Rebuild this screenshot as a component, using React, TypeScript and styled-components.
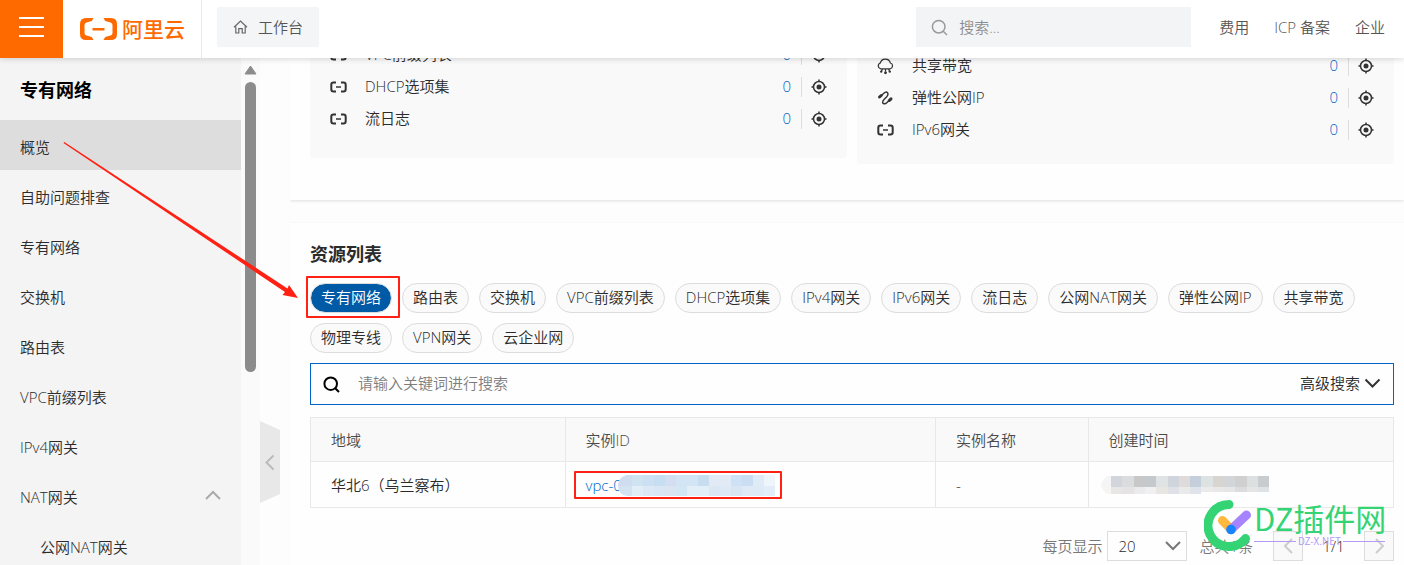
import React from 'react';
import styled, { createGlobalStyle, css } from 'styled-components';

const GlobalStyle = createGlobalStyle`
  * { box-sizing: border-box; }
  body {
    margin: 0;
    background: #fdfdfd;
    color: #2b2b2b;
    font: 350 15px/20px "Open Sans", "Noto Sans CJK SC", sans-serif;
  }
  button, input, select { font: inherit; color: inherit; }
  button { cursor: pointer; }
  a { text-decoration: none; }
`;

const ORANGE = '#ff6a00';
const RED = '#ff2114';
const BLUE = '#0064c8';

/* ---------- shell ---------- */

const Shell = styled.div`
  position: relative;
  display: flex;
  flex-direction: column;
  height: 100vh;
  overflow: hidden;
`;

const Header = styled.header`
  position: relative;
  z-index: 2;
  flex: none;
  display: flex;
  align-items: center;
  height: 58px;
  padding-right: 19px;
  background: #fff;
  box-shadow: 0 1px 6px rgba(0, 0, 0, 0.16);
`;

const MenuButton = styled.button`
  display: flex;
  align-items: center;
  justify-content: center;
  width: 63px;
  height: 58px;
  padding: 0 0 4px;
  border: 0;
  background: ${ORANGE};
`;

const Brand = styled.a`
  display: flex;
  align-items: center;
  gap: 5px;
  width: 139px;
  height: 58px;
  padding-left: 17px;
  border-right: 1px solid #e8e8e8;
  color: ${ORANGE};
  font-size: 21px;
  font-weight: 500;
  line-height: 24px;
  white-space: nowrap;
`;

const WorkbenchButton = styled.button`
  display: flex;
  align-items: center;
  gap: 10px;
  height: 40px;
  margin: 0 auto 4px 15px;
  padding: 0 16px;
  border: 0;
  border-radius: 2px;
  background: #f4f5f7;
  color: #555;
`;

const GlobalSearch = styled.label`
  display: flex;
  align-items: center;
  gap: 11px;
  width: 275px;
  height: 40px;
  margin: 0 28px 4px 0;
  padding: 0 15px;
  background: #f3f4f6;
  color: #999;
`;

const PlainInput = styled.input`
  flex: 1;
  min-width: 0;
  padding: 0;
  border: 0;
  outline: 0;
  background: transparent;
  &::placeholder { color: #8c8c8c; opacity: 1; }
`;

const TopLinks = styled.nav`
  display: flex;
  gap: 25px;
  padding-bottom: 4px;
  a { color: #555; white-space: nowrap; }
`;

const Body = styled.div`
  flex: 1;
  min-height: 0;
  display: flex;
`;

/* ---------- sidebar ---------- */

const Sidebar = styled.nav`
  flex: none;
  width: 241px;
  background: #f4f4f4;
`;

const SidebarTitle = styled.h2`
  margin: 0;
  padding: 20px 20px 18px;
  color: #000;
  font-size: 18px;
  line-height: 24px;
`;

const MenuLink = styled.a<{ $active?: boolean; $nested?: boolean }>`
  display: flex;
  align-items: center;
  justify-content: space-between;
  height: 50px;
  padding: 4px 20px 0 ${(p) => (p.$nested ? 40 : 20)}px;
  background: ${(p) => (p.$active ? '#ddd' : 'transparent')};
  color: inherit;
`;

const ScrollTrack = styled.div`
  flex: none;
  display: flex;
  flex-direction: column;
  align-items: center;
  gap: 7px;
  width: 19px;
  padding-top: 7px;
  background: #fafafa;
`;

const ScrollThumb = styled.div`
  width: 11px;
  height: 58%;
  border-radius: 6px;
  background: #8b8b8b;
`;

const Rail = styled.div`
  flex: none;
  width: 30px;
  padding-top: 363px;
`;

const CollapseButton = styled.button`
  display: block;
  padding: 0;
  border: 0;
  background: none;
`;

/* ---------- content ---------- */

const Main = styled.main`
  flex: 1;
  min-width: 0;
  overflow: hidden;
  display: flex;
  flex-direction: column;
  gap: 23px;
`;

const Card = styled.section`
  flex: none;
  padding: 19px 10px 20px 20px;
  background: #fefefe;
  box-shadow: 0 1px 3px rgba(0, 0, 0, 0.12);
`;

const SummaryCard = styled(Card)`
  margin-top: -39px;
  padding-top: 0;
  padding-bottom: 36px;
`;

const SummaryGrid = styled.div`
  display: grid;
  grid-template-columns: 1fr 1fr;
  gap: 10px;
  align-items: start;
`;

const Panel = styled.ul<{ $offset?: boolean }>`
  margin: 0;
  padding: ${(p) => (p.$offset ? '31px 20px 18px' : '20px 20px 23px')};
  border-radius: 4px;
  background: #f9f9f9;
  list-style: none;
`;

const PanelRow = styled.li`
  display: flex;
  align-items: center;
  height: 32px;
`;

const PanelLabel = styled.span`
  flex: 1;
  padding: 0 0 2px 18px;
`;

const Count = styled.a`
  margin-right: 10px;
  padding-bottom: 2px;
  color: ${BLUE};
`;

const LocateButton = styled.button`
  display: flex;
  align-items: center;
  height: 20px;
  padding: 0 0 0 9px;
  border: 0;
  border-left: 1px solid #ddd;
  background: none;
`;

const CardTitle = styled.h3`
  margin: 0 0 17px;
  font-size: 18px;
  line-height: 24px;
`;

const Tabs = styled.div`
  display: flex;
  flex-wrap: wrap;
  gap: 10px;
  margin-bottom: 10px;
`;

const Tab = styled.button<{ $active?: boolean }>`
  position: relative;
  height: 30px;
  padding: 0 10px 2px;
  border: 1px solid #dcdcdc;
  border-radius: 15px;
  background: #fafafa;
  line-height: 26px;
  white-space: nowrap;

  ${(p) =>
    p.$active &&
    css`
      background: #005aa5;
      background-clip: padding-box;
      color: #fff;

      &::after {
        content: '';
        position: absolute;
        inset: -8px -9px -6px -5px;
        border: 2px solid ${RED};
        border-radius: 1px;
      }
    `}
`;

const FilterBar = styled.div`
  display: flex;
  align-items: center;
  height: 42px;
  margin-bottom: 12px;
  padding: 0 12px;
  border: 1px solid ${BLUE};
`;

const FilterField = styled.label`
  flex: 1;
  display: flex;
  align-items: center;
  gap: 18px;
  color: #000;
  input { padding-bottom: 3px; }
  input::placeholder { color: #7d7d7d; }
`;

const AdvancedButton = styled.button`
  display: flex;
  align-items: center;
  gap: 4px;
  padding: 0 0 2px;
  border: 0;
  background: none;
`;

const Table = styled.table`
  width: 100%;
  table-layout: fixed;
  border-collapse: collapse;

  th, td {
    padding: 0 20px;
    border: 1px solid #e8e8e8;
    font-weight: inherit;
    text-align: left;
  }
  th { height: 44px; background: #f9f9f9; color: #4a4a4a; }
  td { height: 46px; }
`;

const InstanceId = styled.span`
  position: relative;
  display: inline-flex;
  align-items: center;
  height: 21px;
  vertical-align: middle;

  a { width: 32px; color: ${BLUE}; white-space: nowrap; }
  svg { position: relative; }

  &::after {
    content: '';
    position: absolute;
    inset: -4px -7px -3px -12px;
    border: 2px solid ${RED};
    border-radius: 1px;
    pointer-events: none;
  }
`;

const CreatedAt = styled.span`
  display: flex;
  margin-left: -8px;
`;

const Pager = styled.div`
  display: flex;
  align-items: center;
  justify-content: flex-end;
  margin-top: 23px;
  color: #777;
  white-space: nowrap;
`;

const PageSizeLabel = styled.label`
  display: flex;
  align-items: center;
  gap: 5px;
`;

const SelectBox = styled.span`
  display: grid;
  align-items: center;
  width: 80px;
  height: 30px;
  margin-right: 12px;
  border: 1px solid #ddd;
  color: #2b2b2b;
  > * { grid-area: 1 / 1; }
  svg { justify-self: end; margin-right: 5px; pointer-events: none; }
`;

const PageSize = styled.select`
  appearance: none;
  width: 100%;
  height: 28px;
  padding: 0 10px;
  border: 0;
  outline: 0;
  background: transparent;
`;

const PageButton = styled.button`
  display: flex;
  align-items: center;
  justify-content: center;
  width: 30px;
  height: 30px;
  padding: 0;
  border: 1px solid #ddd;
  background: #f9f9f9;
`;

const PageTotal = styled.span`
  margin-right: 20px;
`;

const PageNumber = styled.span`
  width: 61px;
  color: #2b2b2b;
  text-align: center;
`;

/* ---------- overlays ---------- */

const Arrow = styled.svg`
  position: absolute;
  z-index: 3;
  top: 140px;
  left: 60px;
  pointer-events: none;
`;

const Watermark = styled.div`
  position: absolute;
  z-index: 3;
  right: 19px;
  bottom: 14px;
  display: flex;
  align-items: flex-start;
  gap: 2px;
  pointer-events: none;
`;

const WatermarkText = styled.div`
  display: flex;
  flex-direction: column;
  width: 131px;
  color: #34d474;
  font: 31px/35px "Noto Sans CJK SC", sans-serif;
  white-space: nowrap;
`;

const WatermarkSite = styled.span`
  display: flex;
  align-items: center;
  gap: 2px;
  color: #b49af5;
  font-size: 10px;
  line-height: 12px;

  &::before, &::after {
    content: '';
    flex: 1;
    height: 1px;
    background: #b49af5;
  }
`;

/* ---------- drawings ---------- */

const Chevron = ({ d, w, h, color, stroke = 2 }: { d: string; w: number; h: number; color: string; stroke?: number }) => (
  <svg width={w} height={h} fill="none" stroke={color} strokeWidth={stroke} aria-hidden="true">
    <path d={d} />
  </svg>
);

const BracketIcon = () => (
  <svg width="17" height="12" viewBox="0 0 17 12" fill="none" stroke="#333" aria-hidden="true">
    <path d="M6 1.500H3.500Q1.300 1.500 1.300 3.700V8.300Q1.300 10.500 3.500 10.500H6M11 1.500h2.500Q15.700 1.500 15.700 3.700V8.300Q15.700 10.500 13.500 10.500H11" strokeWidth="2" />
    <path d="M6 6h5" strokeWidth="1.500" />
  </svg>
);

const CloudIcon = () => (
  <svg width="17" height="17" viewBox="0 0 17 17" fill="none" stroke="#333" strokeWidth="1.200" aria-hidden="true">
    <path d="M3.800 10.800A3 3 0 0 1 3.300 5 5.200 5.200 0 0 1 13.400 5 3 3 0 0 1 13.200 10.800M3.800 10.800h9.400M8.500 10.800v3M5.500 11l-1 2M11.500 11l1 2" />
    <g fill="#333" stroke="none">
      <circle cx="8.500" cy="14.800" r="1.400" />
      <circle cx="4.200" cy="13.600" r="1.200" />
      <circle cx="12.800" cy="13.600" r="1.200" />
    </g>
  </svg>
);

const EipIcon = () => (
  <svg width="17" height="14" viewBox="0 0 17 14" fill="none" stroke="#333" strokeLinecap="round" aria-hidden="true">
    <path d="M3.500 5.500 6.500 2.500Q9 0 10.500 1.800 11.800 3.500 9.500 6L7 8.500Q4.800 11 6.200 12.400 8 13.500 10 11.500L13 8.500" strokeWidth="1.400" />
    <path d="M2.500 6 4.200 4.500M12.300 9.500 14 7.900" strokeWidth="3" />
  </svg>
);

const TargetIcon = () => (
  <svg width="16" height="16" viewBox="0 0 16 16" fill="none" stroke="#333" strokeWidth="1.500" aria-hidden="true">
    <circle cx="8" cy="8" r="5.500" />
    <path d="M8 .5v2.500M8 13v2.500M.5 8h2.500M13 8h2.500" />
    <circle cx="8" cy="8" r="2.500" fill="#333" stroke="none" />
  </svg>
);

const SearchIcon = ({ color, stroke }: { color: string; stroke: number }) => (
  <svg width="17" height="17" viewBox="0 0 17 17" fill="none" stroke={color} strokeWidth={stroke} aria-hidden="true">
    <circle cx="7.700" cy="7.700" r="6.300" />
    <path d="M12.200 12.200 16 16" />
  </svg>
);

const HomeIcon = () => (
  <svg width="15" height="14" viewBox="0 0 15 14" fill="none" stroke="#666" strokeWidth="1.200" aria-hidden="true">
    <path d="M1 7.200 7.500 1 14 7.200M2.800 6.500V13H5.800V8.600H9.200V13H12.200V6.500" />
  </svg>
);

const LogoMark = () => (
  <svg width="37" height="22" viewBox="0 0 37 22" fill={ORANGE} aria-hidden="true">
    <path d="M13.500 0H6Q0 0 0 6V16Q0 22 6 22H13.500L11.800 19 6.500 17.500Q4.500 17 4.500 15V7Q4.500 5 6.500 4.500L11.800 3Z" />
    <path d="M23.500 0H31Q37 0 37 6V16Q37 22 31 22H23.500L25.200 19 30.500 17.500Q32.500 17 32.500 15V7Q32.500 5 30.500 4.500L25.200 3Z" />
    <path d="M12.500 10H24.500V12.500H12.500Z" />
  </svg>
);

const ID_CELLS = [
  ['#d0dcef', '#cfe3f0', '#ccdff3', '#c6ddf2', '#d3dff0', '#d3e5f4', '#d3e5f4', '#c6def0', '#e1eaf5', '#e1eaf5', '#cfe1f4', '#cbddf3', '#dfebf7', '#eef5fb'],
  ['#d3e3f1', '#e1eef8', '#dbe8f6', '#dbe6f4', '#dbe4f1', '#d3e6f4', '#e3eff7', '#e3eff7', '#dbe8f4', '#dde9f5', '#d8e6f3', '#dfeaf6', '#deeaf5', '#e3edf7'],
];

const TIME_CELLS = [
  ['#d2d6dc', '#dadcde', '#c9c8c8', '#c4c9ce', '#e0e3e3', '#d0d4dc', '#dfdbda', '#c5cfdb', '#dde2e2', '#d8d5d0', '#d2d6d8', '#d0d0d1', '#dce0e0', '#c9cccf'],
  ['#e9e7e6', '#e6e3e5', '#ebebed', '#f0f0f0', '#e8e6e3', '#e0e1e6', '#eaeaea', '#dfe4ea', '#ebebeb', '#e8e8e8', '#e6e6e6', '#dcdcde', '#e5e5e5', '#dfe2e5'],
];

const IdMosaic = () => (
  <svg width="157" height="21" viewBox="0 0 157 21" shapeRendering="crispEdges" aria-hidden="true">
    <clipPath id="id-clip"><path d="M157 0H9Q0 2 0 11 0 19 9 21H157Z" /></clipPath>
    <g clipPath="url(#id-clip)">
      {ID_CELLS.map((row, r) =>
        row.map((fill, c) => <rect key={`${r}-${c}`} x={c ? c * 11 + 3 : 0} y={r * 11} width={c ? 11 : 14} height={r ? 10 : 11} fill={fill} />),
      )}
    </g>
  </svg>
);

const TimeMosaic = () => (
  <svg width="168" height="18" viewBox="0 0 168 18" aria-hidden="true">
    <path d="M12 0H6Q0 5 0 9T6 18H12Z" fill="#f5f5f5" />
    <g shapeRendering="crispEdges">
      {TIME_CELLS.map((row, r) =>
        row.map((fill, c) => (
          <rect key={`${r}-${c}`} x={10 + c * 11.3} y={r * 11} width="11.300" height={r ? (c > 7 ? 5 : 7) : 11} fill={fill} />
        )),
      )}
    </g>
  </svg>
);

/* ---------- page ---------- */

type Item = { label: string; icon: React.ReactNode };

const LEFT_ITEMS: Item[] = [
  { label: 'VPC前缀列表', icon: <BracketIcon /> },
  { label: 'DHCP选项集', icon: <BracketIcon /> },
  { label: '流日志', icon: <BracketIcon /> },
];

const RIGHT_ITEMS: Item[] = [
  { label: '共享带宽', icon: <CloudIcon /> },
  { label: '弹性公网IP', icon: <EipIcon /> },
  { label: 'IPv6网关', icon: <BracketIcon /> },
];

const MENU = ['概览', '自助问题排查', '专有网络', '交换机', '路由表', 'VPC前缀列表', 'IPv4网关'];

const TABS = [
  '专有网络', '路由表', '交换机', 'VPC前缀列表', 'DHCP选项集', 'IPv4网关', 'IPv6网关',
  '流日志', '公网NAT网关', '弹性公网IP', '共享带宽', '物理专线', 'VPN网关', '云企业网',
];

const SummaryPanel = ({ items, offset }: { items: Item[]; offset?: boolean }) => (
  <Panel $offset={offset}>
    {items.map((item) => (
      <PanelRow key={item.label}>
        {item.icon}
        <PanelLabel>{item.label}</PanelLabel>
        <Count href="#">0</Count>
        <LocateButton aria-label={item.label}><TargetIcon /></LocateButton>
      </PanelRow>
    ))}
  </Panel>
);

export default function App() {
  return (
    <Shell>
      <GlobalStyle />
      <Header>
        <MenuButton aria-label="菜单">
          <svg width="25" height="20" fill="#fff" aria-hidden="true">
            <path d="M0 0h25v2H0zM0 9h25v2H0zM0 18h25v2H0z" />
          </svg>
        </MenuButton>
        <Brand href="#"><LogoMark />阿里云</Brand>
        <WorkbenchButton><HomeIcon />工作台</WorkbenchButton>
        <GlobalSearch>
          <SearchIcon color="#999" stroke={1.5} />
          <PlainInput type="text" placeholder="搜索..." aria-label="搜索" />
        </GlobalSearch>
        <TopLinks>
          <a href="#">费用</a>
          <a href="#">ICP 备案</a>
          <a href="#">企业</a>
        </TopLinks>
      </Header>

      <Body>
        <Sidebar>
          <SidebarTitle>专有网络</SidebarTitle>
          {MENU.map((label, i) => (
            <MenuLink key={label} href="#" $active={i === 0}>{label}</MenuLink>
          ))}
          <MenuLink href="#">
            NAT网关
            <Chevron d="M1 9 8 2l7 7" w={16} h={14} color="#aaa" />
          </MenuLink>
          <MenuLink href="#" $nested>公网NAT网关</MenuLink>
        </Sidebar>
        <ScrollTrack>
          <svg width="13" height="10" aria-hidden="true">
            <path d="M6.500 1 12 9H1Z" fill="#8b8b8b" stroke="#8b8b8b" strokeLinejoin="round" />
          </svg>
          <ScrollThumb />
        </ScrollTrack>
        <Rail>
          <CollapseButton aria-label="收起">
            <svg width="20" height="82" aria-hidden="true">
              <path d="M0 0 20 9V73L0 82Z" fill="#e8e8e8" />
              <path d="M13.500 34.500 6.500 41.500l7 7" fill="none" stroke="#bbb" strokeWidth="2" />
            </svg>
          </CollapseButton>
        </Rail>

        <Main>
          <SummaryCard>
            <SummaryGrid>
              <SummaryPanel items={LEFT_ITEMS} />
              <SummaryPanel items={RIGHT_ITEMS} offset />
            </SummaryGrid>
          </SummaryCard>

          <Card>
            <CardTitle>资源列表</CardTitle>
            <Tabs>
              {TABS.map((label, i) => (
                <Tab key={label} $active={i === 0}>{label}</Tab>
              ))}
            </Tabs>
            <FilterBar>
              <FilterField>
                <SearchIcon color="#000" stroke={2} />
                <PlainInput type="text" placeholder="请输入关键词进行搜索" aria-label="关键词" />
              </FilterField>
              <AdvancedButton>
                高级搜索
                <Chevron d="M1.500 1.500 8.500 8.500l7-7" w={17} h={11} color="#333" />
              </AdvancedButton>
            </FilterBar>
            <Table>
              <colgroup>
                <col style={{ width: '23.5%' }} />
                <col style={{ width: '34.2%' }} />
                <col style={{ width: '14.1%' }} />
                <col />
              </colgroup>
              <thead>
                <tr>
                  <th>地域</th>
                  <th>实例ID</th>
                  <th>实例名称</th>
                  <th>创建时间</th>
                </tr>
              </thead>
              <tbody>
                <tr>
                  <td>华北6（乌兰察布）</td>
                  <td>
                    <InstanceId><a href="#">vpc-0</a><IdMosaic /></InstanceId>
                  </td>
                  <td>-</td>
                  <td><CreatedAt><TimeMosaic /></CreatedAt></td>
                </tr>
              </tbody>
            </Table>
            <Pager>
              <PageSizeLabel>
                每页显示
                <SelectBox>
                  <PageSize defaultValue="20">
                    <option>20</option>
                    <option>50</option>
                  </PageSize>
                  <Chevron d="M1 2 8 9l7-7" w={16} h={12} color="#777" />
                </SelectBox>
              </PageSizeLabel>
              <PageTotal>总共1条</PageTotal>
              <PageButton aria-label="上一页"><Chevron d="M9 1 2 8l7 7" w={11} h={16} color="#ccc" /></PageButton>
              <PageNumber>1/1</PageNumber>
              <PageButton aria-label="下一页"><Chevron d="M2 1 9 8l-7 7" w={11} h={16} color="#ccc" /></PageButton>
            </Pager>
          </Card>
        </Main>
      </Body>

      <Arrow width="240" height="162" fill={RED} aria-hidden="true">
        <path d="M4.300 2 227.500 148.500 229 145 238 158 222.500 155 225 152 3.500 3Z" />
      </Arrow>

      <Watermark>
        <svg width="48" height="51" viewBox="0 0 48 51" fill="none" strokeLinecap="round" aria-hidden="true">
          <path d="M25 4.500A21 21 0 1 0 41.500 38.500" stroke="#34d474" strokeWidth="9" />
          <path d="M18.500 20.500 27 29.500" stroke="#ffb83d" strokeWidth="9" />
          <path d="M42.500 15 27 29.500" stroke="#a684ff" strokeWidth="9" />
          <circle cx="27" cy="29.500" r="4.800" fill="#1684ff" />
        </svg>
        <WatermarkText>
          DZ插件网
          <WatermarkSite>DZ-X.NET</WatermarkSite>
        </WatermarkText>
      </Watermark>
    </Shell>
  );
}
